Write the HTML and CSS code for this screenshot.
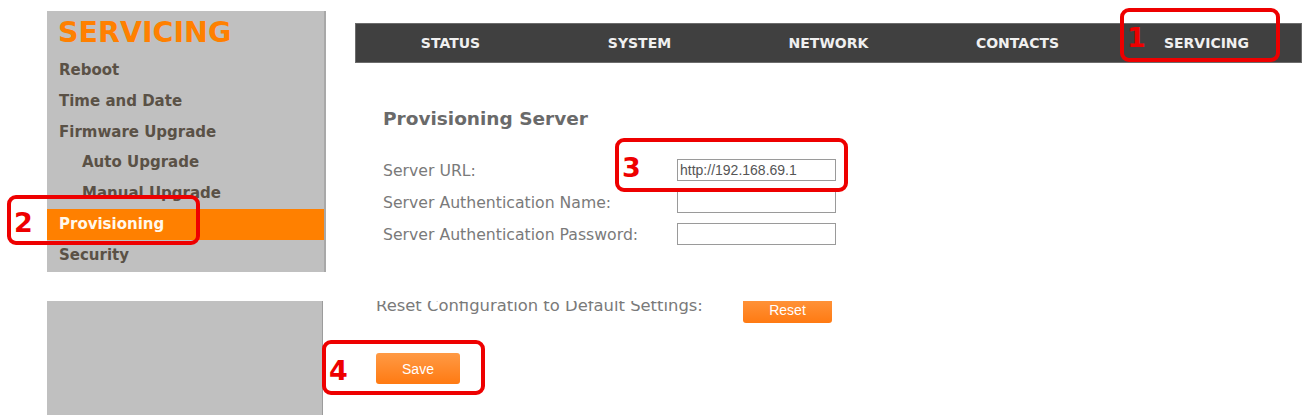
FILE: index.html
```html
<!DOCTYPE html>
<html lang="en">
<head>
    <meta charset="UTF-8">
    <meta name="viewport" content="width=device-width, initial-scale=1.0">
    <title>Servicing - Provisioning</title>
    <link rel="stylesheet" href="styles.css">
</head>
<body>
    <div class="page">
        <div class="top">
            <aside class="sidebar">
                <h2 class="sidebar-title">SERVICING</h2>
                <ul class="side-menu">
                    <li>Reboot</li>
                    <li>Time and Date</li>
                    <li>Firmware Upgrade</li>
                    <li class="sub">Auto Upgrade</li>
                    <li class="sub">Manual Upgrade</li>
                    <li class="active">Provisioning</li>
                    <li>Security</li>
                </ul>
            </aside>

            <main class="main">
                <nav class="topnav">
                    <a>STATUS</a>
                    <a>SYSTEM</a>
                    <a>NETWORK</a>
                    <a>CONTACTS</a>
                    <a>SERVICING</a>
                </nav>

                <section class="form">
                    <h3 class="form-title">Provisioning Server</h3>
                    <div class="form-row">
                        <label>Server URL:</label>
                        <input type="text" value="http://192.168.69.1">
                    </div>
                    <div class="form-row">
                        <label>Server Authentication Name:</label>
                        <input type="text">
                    </div>
                    <div class="form-row">
                        <label>Server Authentication Password:</label>
                        <input type="password">
                    </div>
                </section>
            </main>
        </div>

        <div class="bottom">
            <div class="sidebar-fill"></div>
            <div class="actions">
                <div class="reset-row">
                    <span class="reset-label">Reset Configuration to Default Settings:</span>
                    <button class="btn btn-reset">Reset</button>
                </div>
                <button class="btn btn-save">Save</button>
            </div>
        </div>

        <!-- step markers drawn over the page -->
        <div class="marker marker-1"><span>1</span></div>
        <div class="marker marker-2"><span>2</span></div>
        <div class="marker marker-3"><span>3</span></div>
        <div class="marker marker-4"><span>4</span></div>
    </div>
</body>
</html>
```

FILE: styles.css
```css
* {
    margin: 0;
    padding: 0;
    box-sizing: border-box;
}

body {
    font-family: "DejaVu Sans", Verdana, sans-serif;
    background: #fff;
    width: 1307px;
    height: 415px;
    overflow: hidden;
}

.page {
    position: relative;
    height: 415px;
}

.top {
    display: flex;
    align-items: flex-start;
    padding: 11px 0 0 47px;
    height: 272px;
}

/* left menu */
.sidebar {
    width: 279px;
    height: 261px;
    background: #c0c0c0;
    border-right: 2px solid #a8a8a8;
    padding-top: 6px;
}

.sidebar-title {
    font-size: 28.5px;
    line-height: 32px;
    font-weight: 700;
    color: #ff8000;
    padding-left: 11px;
    margin-bottom: 6px;
}

.side-menu {
    list-style: none;
}

.side-menu li {
    font-size: 15px;
    font-weight: 700;
    line-height: 30.8px;
    color: #5a5146;
    padding-left: 12px;
}

.side-menu li.sub {
    padding-left: 35px;
}

.side-menu li.active {
    background: #ff8000;
    color: #fff8ec;
}

/* main area */
.main {
    margin: 12px 0 0 29px;
    width: 947px;
}

.topnav {
    display: grid;
    grid-template-columns: repeat(5, 1fr);
    align-items: center;
    height: 40px;
    background: #404040;
    border: 1px solid #6c6c6c;
}

.topnav a {
    text-align: center;
    color: #f0f0f0;
    font-size: 14px;
    font-weight: 700;
}

.form {
    padding: 44px 0 0 28px;
}

.form-title {
    font-size: 18.5px;
    line-height: 24px;
    font-weight: 700;
    color: #6a6a6a;
    margin-bottom: 23px;
}

.form-row {
    display: flex;
    align-items: center;
    height: 32px;
}

.form-row label {
    width: 294px;
    font-size: 15.7px;
    color: #7a7a7a;
}

.form-row input {
    width: 159px;
    height: 22px;
    border: 1px solid #9a9a9a;
    padding: 0 2px;
    font-family: "Liberation Sans", Arial, sans-serif;
    font-size: 14px;
    color: #555;
    background: #fff;
}

/* second half of the page */
.bottom {
    display: flex;
    margin-top: 29px;
    padding-left: 47px;
}

.sidebar-fill {
    width: 276px;
    height: 114px;
    background: #c0c0c0;
    border-right: 1px solid #9c9c9c;
}

.actions {
    padding-left: 53px;
}

.reset-row {
    display: flex;
    align-items: flex-end;
    height: 22px;
    overflow: hidden;
}

.reset-label {
    width: 367px;
    flex-shrink: 0;
    font-size: 16.4px;
    line-height: 30px;
    color: #7a7a7a;
    margin-bottom: 2px;
}

.btn {
    border: none;
    border-radius: 3px;
    background: linear-gradient(#ff9a45, #ff7a12);
    color: #fff;
    font-family: "Liberation Sans", Arial, sans-serif;
    font-size: 14px;
    flex-shrink: 0;
}

.btn-reset {
    width: 89px;
    height: 30px;
    padding-top: 4px;
}

.btn-save {
    display: block;
    width: 84px;
    height: 31px;
    margin-top: 30px;
}

/* red annotation boxes */
.marker {
    position: absolute;
    display: flex;
    align-items: center;
    border: 4px solid #ee0000;
    border-radius: 9px;
    padding: 5px 0 0 3px;
}

.marker span {
    font-size: 27px;
    font-weight: 700;
    color: #ee0000;
    line-height: 1;
}

.marker-1 {
    left: 1120px;
    top: 8px;
    width: 160px;
    height: 54px;
}

.marker-2 {
    left: 7px;
    top: 195px;
    width: 193px;
    height: 50px;
}

.marker-3 {
    left: 615px;
    top: 138px;
    width: 233px;
    height: 54px;
}

.marker-4 {
    left: 322px;
    top: 340px;
    width: 163px;
    height: 55px;
}
```
